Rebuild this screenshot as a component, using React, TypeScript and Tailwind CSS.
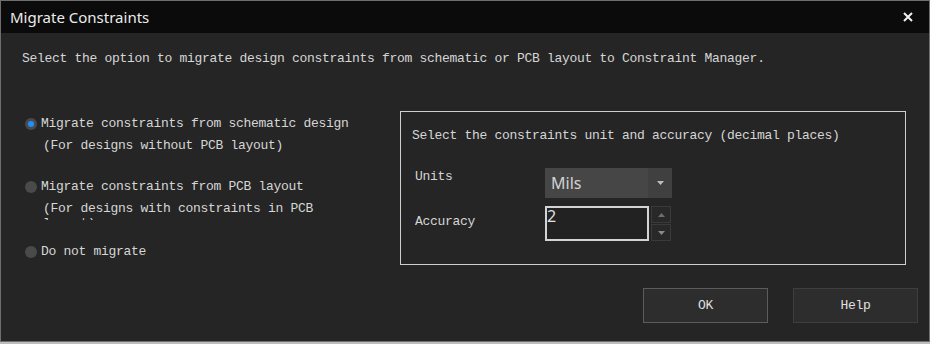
import React from 'react';

const mono = "font-['Liberation_Mono',monospace] text-[13px] tracking-[-0.3px]";

function Radio({ checked }: { checked?: boolean }) {
  return (
    <span className="flex h-[12px] w-[12px] shrink-0 items-center justify-center rounded-full bg-[#4a4a4a]">
      {checked && <span className="h-[6px] w-[6px] rounded-full bg-[#1e90ff]" />}
    </span>
  );
}

function Tri({ up }: { up?: boolean }) {
  return (
    <svg width="7" height="4" viewBox="0 0 7 4">
      {up ? <polygon points="0,4 7,4 3.5,0" fill="#6e6e6e" /> : <polygon points="0,0 7,0 3.5,4" fill="#8a8a8a" />}
    </svg>
  );
}

export default function App() {
  return (
    <div className="h-[344px] w-[930px] bg-[#bdbdbd]">
      <div className="flex h-[342px] w-[930px] flex-col border border-[#6e6e6e] bg-[#252525] text-[#d6d6d6]">
        {/* title bar */}
        <div className="flex h-[32px] shrink-0 items-center justify-between bg-[#0b0b0b] pl-[9px] pr-[16px]">
          <span className="font-['Segoe_UI','Noto_Sans',sans-serif] text-[15px] text-[#ececec]">Migrate Constraints</span>
          <svg width="10" height="10" viewBox="0 0 10 10">
            <path d="M1 1 L9 9 M9 1 L1 9" stroke="#f0f0f0" strokeWidth="2" />
          </svg>
        </div>

        <div className={`flex flex-1 flex-col px-[21px] ${mono}`}>
          <p className="pt-[18px] leading-[16px]">
            Select the option to migrate design constraints from schematic or PCB layout to Constraint Manager.
          </p>

          <div className="mt-[44px] flex items-start">
            {/* options */}
            <div className="flex w-[378px] flex-col pl-[3px] pt-[2px]">
              <div className="flex items-center gap-[4px] leading-[22px]">
                <Radio checked />
                <span>Migrate constraints from schematic design</span>
              </div>
              <div className="pl-[18px] leading-[22px]">(For designs without PCB layout)</div>

              <div className="mt-[19px] flex items-center gap-[4px] leading-[22px]">
                <Radio />
                <span>Migrate constraints from PCB layout</span>
              </div>
              <div className="pl-[18px] leading-[22px]">(For designs with constraints in PCB</div>
              {/* label wraps and is clipped by its box, only the tops of the last line show */}
              <div className="-mt-[4px] h-[4px] overflow-hidden pl-[18px] leading-[16px]">layout)</div>

              <div className="mt-[21px] flex items-center gap-[4px] leading-[22px]">
                <Radio />
                <span>Do not migrate</span>
              </div>
            </div>

            {/* unit and accuracy */}
            <div className="h-[154px] w-[506px] border border-[#cfcfcf] pl-[11px] pt-[14px]">
              <p className="leading-[20px]">Select the constraints unit and accuracy (decimal places)</p>

              <div className="mt-[22px] flex items-start">
                <span className="-mt-[1px] w-[133px] pl-[3px] leading-[20px]">Units</span>
                <div className="flex h-[30px] w-[127px] bg-[#464646]">
                  <span className="flex flex-1 items-center pl-[6px] font-['Noto_Sans',sans-serif] text-[16px] tracking-normal text-[#d2d2d2]">
                    Mils
                  </span>
                  <span className="flex w-[24px] items-center justify-center bg-[#404040]">
                    <svg width="7" height="4" viewBox="0 0 7 4">
                      <polygon points="0,0 7,0 3.5,4" fill="#bdbdbd" />
                    </svg>
                  </span>
                </div>
              </div>

              <div className="mt-[8px] flex items-start">
                <span className="mt-[6px] w-[133px] pl-[3px] leading-[20px]">Accuracy</span>
                <div className="flex gap-[2px]">
                  <div className="h-[35px] w-[104px] border-2 border-[#d4d4d4] bg-[#222222] font-['Noto_Sans',sans-serif] text-[16px] leading-[16px] tracking-normal text-[#e0e0e0]">
                    2
                  </div>
                  <div className="flex flex-col gap-[1px]">
                    <span className="flex h-[17px] w-[20px] items-center justify-center border border-[#3a3a3a] bg-[#282828]">
                      <Tri up />
                    </span>
                    <span className="flex h-[17px] w-[20px] items-center justify-center border border-[#3a3a3a] bg-[#282828]">
                      <Tri />
                    </span>
                  </div>
                </div>
              </div>
            </div>
          </div>

          {/* buttons */}
          <div className="mr-[-10px] mt-[23px] flex justify-end gap-[25px]">
            <button className="h-[35px] w-[125px] border border-[#5c5c5c] bg-[#2d2d2d] text-[#e0e0e0]">OK</button>
            <button className="h-[35px] w-[125px] border border-[#3e3e3e] bg-[#2d2d2d] text-[#e0e0e0]">Help</button>
          </div>
        </div>
      </div>
    </div>
  );
}
